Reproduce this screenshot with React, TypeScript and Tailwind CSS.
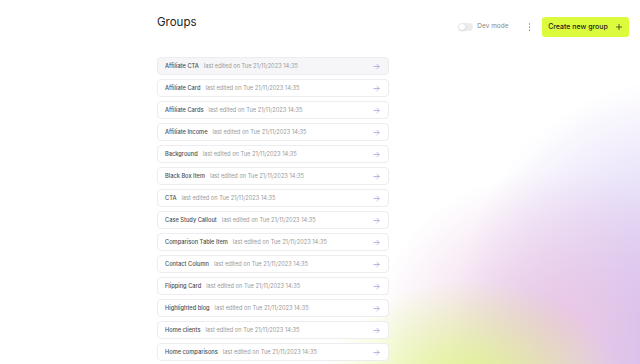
import React from "react";

const groups = [
  "Affiliate CTA",
  "Affiliate Card",
  "Affiliate Cards",
  "Affiliate Income",
  "Background",
  "Black Box Item",
  "CTA",
  "Case Study Callout",
  "Comparison Table Item",
  "Contact Column",
  "Flipping Card",
  "Highlighted blog",
  "Home clients",
  "Home comparisons",
];

const Arrow = () => (
  <svg width="9" height="9" viewBox="0 0 24 24" fill="none" stroke="#a49cdc" strokeWidth="2" strokeLinecap="round" strokeLinejoin="round">
    <path d="M5 12h14" />
    <path d="M13 6l6 6-6 6" />
  </svg>
);

export default function App() {
  return (
    <div className="relative h-[364px] w-[640px] overflow-hidden bg-white font-['Inter',sans-serif]">
      <div className="pointer-events-none absolute inset-0 bg-[radial-gradient(ellipse_150px_110px_at_470px_390px,rgba(222,246,130,0.95),transparent),radial-gradient(ellipse_180px_160px_at_555px_330px,rgba(234,196,226,0.95),transparent),radial-gradient(ellipse_220px_260px_at_670px_340px,rgba(198,180,240,1),transparent)]" />
      <div className="relative flex flex-col pl-[157px] pr-[11px]">
        <div className="flex h-[53px] items-start justify-between">
          <h1 className="mt-[15px] text-[11.5px] font-normal leading-[14px] text-[#1c1c1c]">Groups</h1>
          <div className="mt-[17px] flex items-center">
            <div className="flex items-center gap-[4px]">
              <div className="relative h-[8px] w-[15px] rounded-full bg-[#ececec]">
                <div className="absolute left-[1px] top-[1px] h-[6px] w-[6px] rounded-full bg-white shadow-sm" />
              </div>
              <span className="text-[6.5px] text-[#888]">Dev mode</span>
            </div>
            <div className="ml-[20px] flex flex-col gap-[1.5px]">
              <span className="h-[1.5px] w-[1.5px] rounded-full bg-[#8f8fb8]" />
              <span className="h-[1.5px] w-[1.5px] rounded-full bg-[#8f8fb8]" />
              <span className="h-[1.5px] w-[1.5px] rounded-full bg-[#8f8fb8]" />
            </div>
            <button className="ml-[12px] flex h-[20px] w-[87px] items-center justify-center gap-[7px] rounded-[3px] bg-[#dcfb3c] text-[7px] font-medium text-[#1c1c1c]">
              Create new group
              <svg width="8" height="8" viewBox="0 0 24 24" fill="none" stroke="#1c1c1c" strokeWidth="2" strokeLinecap="round">
                <path d="M12 4v16M4 12h16" />
              </svg>
            </button>
          </div>
        </div>
        <div className="mt-[4px] flex w-[232px] flex-col gap-[4px]">
          {groups.map((g, i) => (
            <div
              key={g}
              className={`flex h-[18px] items-center justify-between rounded-[4px] border border-[#ececf1] pl-[7px] pr-[7px] ${i === 0 ? "bg-[#f6f6f9]" : "bg-white"}`}
            >
              <div className="flex items-center gap-[5px] text-[5.7px]">
                <span className="font-medium text-[#4e4e4e]">{g}</span>
                <span className="text-[#9a9a9a]">last edited on Tue 21/11/2023 14:35</span>
              </div>
              <Arrow />
            </div>
          ))}
        </div>
      </div>
    </div>
  );
}
